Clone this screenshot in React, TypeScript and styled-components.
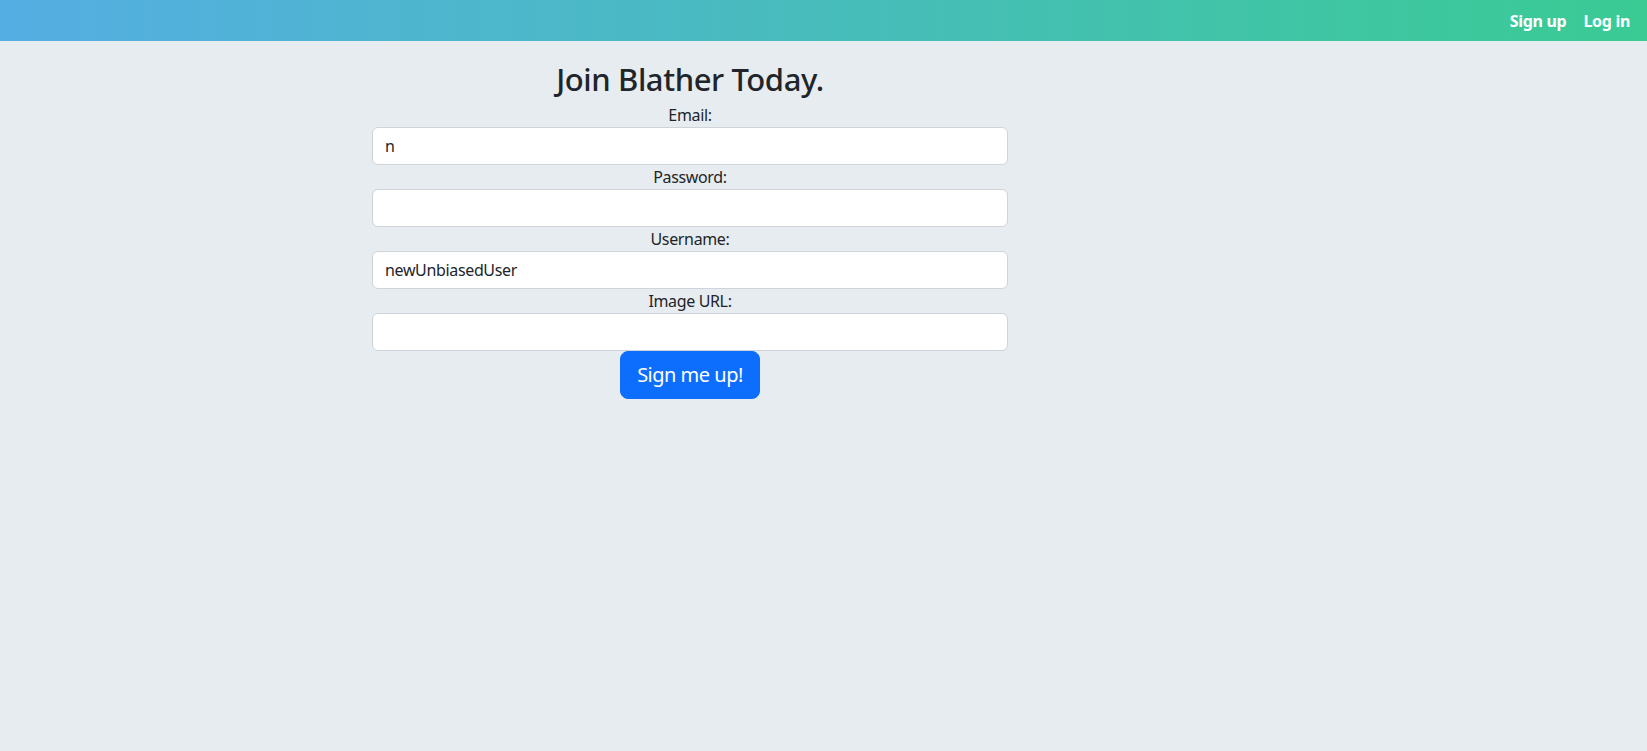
import React from "react";
import styled, { createGlobalStyle } from "styled-components";

const Global = createGlobalStyle`
  html, body { margin: 0; padding: 0; }
  body {
    background: #e7ecf0;
    font-family: "Noto Sans", "Open Sans", sans-serif;
    color: #212529;
    font-size: 16px;
    line-height: 1.5;
  }
  * { box-sizing: border-box; }
`;

const Page = styled.div`
  min-height: 751px;
  background: #e7ecf0;
`;

const TopBar = styled.header`
  height: 41px;
  background: linear-gradient(90deg, #55aee3 0%, #3acb94 100%);
  display: flex;
  align-items: center;
  justify-content: flex-end;
  padding-right: 17px;
  gap: 17px;
`;

const NavLink = styled.a`
  color: #ffffff;
  font-weight: 700;
  font-size: 16px;
  letter-spacing: -0.3px;
  text-decoration: none;
  cursor: pointer;
`;

const Main = styled.main`
  display: grid;
  grid-template-columns: 372px 636px 1fr;
`;

const Form = styled.form`
  grid-column: 2;
  display: flex;
  flex-direction: column;
  align-items: stretch;
  padding-top: 19px;
`;

const Title = styled.h2`
  margin: 0 0 5px;
  font-size: 31px;
  font-weight: 500;
  line-height: 38.4px;
  letter-spacing: -0.4px;
  text-align: center;
`;

const Label = styled.label`
  display: block;
  text-align: center;
  font-size: 16px;
  line-height: 24px;
  letter-spacing: -0.35px;
`;

const Input = styled.input`
  display: block;
  width: 100%;
  height: 38px;
  padding: 6px 12px;
  font-family: inherit;
  font-size: 16px;
  line-height: 1.5;
  letter-spacing: -0.35px;
  color: #212529;
  background: #ffffff;
  border: 1px solid #ced4da;
  border-radius: 6px;
  outline: none;
`;

const SubmitButton = styled.button`
  align-self: center;
  height: 48px;
  padding: 8px 16px;
  font-family: inherit;
  font-size: 20px;
  line-height: 1.5;
  letter-spacing: -0.5px;
  color: #ffffff;
  background: #0d6efd;
  border: 1px solid #0d6efd;
  border-radius: 8px;
  cursor: pointer;
`;

const fields = [
  { label: "Email:", type: "text", value: "n" },
  { label: "Password:", type: "password", value: "" },
  { label: "Username:", type: "text", value: "newUnbiasedUser" },
  { label: "Image URL:", type: "text", value: "" },
];

export default function App() {
  return (
    <Page>
      <Global />
      <TopBar>
        <NavLink>Sign up</NavLink>
        <NavLink>Log in</NavLink>
      </TopBar>
      <Main>
        <Form onSubmit={(e) => e.preventDefault()}>
          <Title>Join Blather Today.</Title>
          {fields.map((f) => (
            <React.Fragment key={f.label}>
              <Label>{f.label}</Label>
              <Input type={f.type} defaultValue={f.value} />
            </React.Fragment>
          ))}
          <SubmitButton type="submit">Sign me up!</SubmitButton>
        </Form>
      </Main>
    </Page>
  );
}
